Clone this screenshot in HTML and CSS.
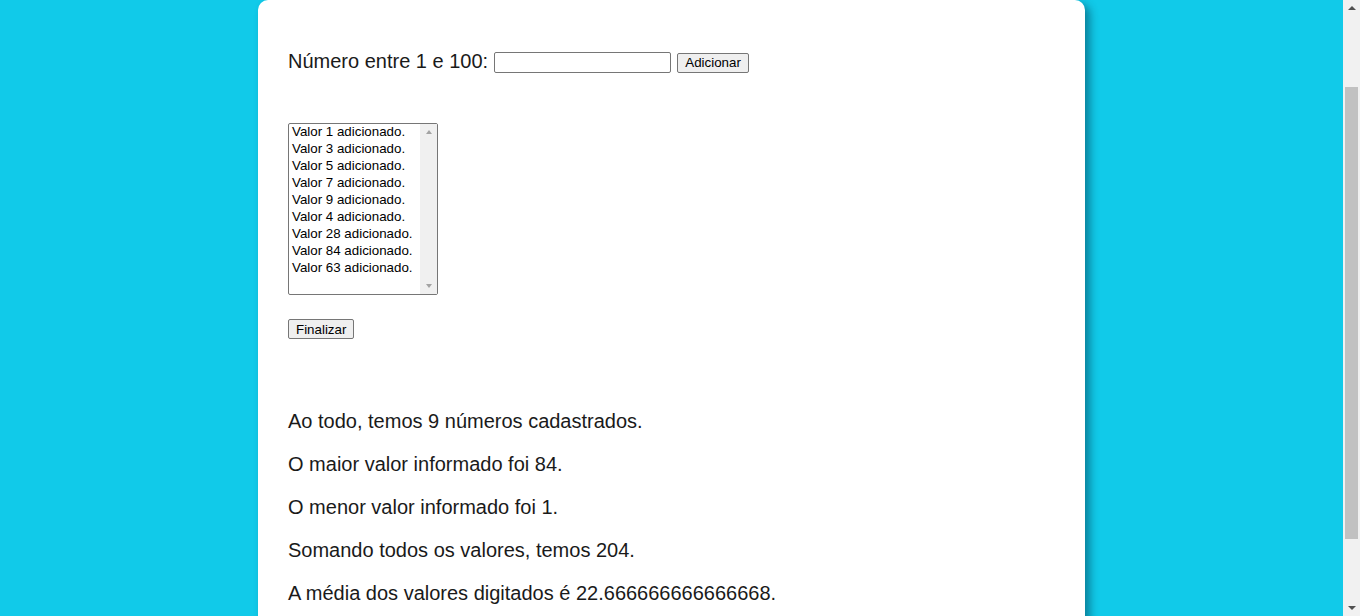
FILE: index.html
```html
<!DOCTYPE html>
<html lang="pt-BR">
<head>
<meta charset="utf-8">
<title>Analisador de números</title>
<link rel="stylesheet" href="styles.css">
</head>
<body>
<div class="page">
  <main class="main">
    <section class="card">
      <p class="entry">Número entre 1 e 100: <input type="number" class="num-input"> <button class="btn add-btn">Adicionar</button></p>
      <div class="listbox">
        <div class="options">
          <div class="opt">Valor 1 adicionado.</div>
          <div class="opt">Valor 3 adicionado.</div>
          <div class="opt">Valor 5 adicionado.</div>
          <div class="opt">Valor 7 adicionado.</div>
          <div class="opt">Valor 9 adicionado.</div>
          <div class="opt">Valor 4 adicionado.</div>
          <div class="opt">Valor 28 adicionado.</div>
          <div class="opt">Valor 84 adicionado.</div>
          <div class="opt">Valor 63 adicionado.</div>
        </div>
        <div class="lb-scroll">
          <span class="lb-arrow up"></span>
          <span class="lb-arrow down"></span>
        </div>
      </div>
      <div class="finish-row"><button class="btn">Finalizar</button></div>
      <div class="results">
        <p>Ao todo, temos 9 números cadastrados.</p>
        <p>O maior valor informado foi 84.</p>
        <p>O menor valor informado foi 1.</p>
        <p>Somando todos os valores, temos 204.</p>
        <p>A média dos valores digitados é 22.666666666666668.</p>
      </div>
    </section>
  </main>
  <div class="scrollbar">
    <span class="sb-arrow up"></span>
    <div class="sb-track"><div class="sb-thumb"></div></div>
    <span class="sb-arrow down"></span>
  </div>
</div>
</body>
</html>
```

FILE: styles.css
```css
html, body {
  margin: 0;
  padding: 0;
  height: 100%;
  overflow: hidden;
}

body {
  font-family: "Liberation Sans", Arial, sans-serif;
  color: #1a1a1a;
}

.page {
  display: flex;
  height: 616px;
}

.main {
  flex: 1;
  background: #11cae9;
  overflow: hidden;
}

.card {
  width: 767px;
  margin: 0 auto;
  padding: 50px 30px 0;
  min-height: 700px;
  background: #ffffff;
  border-radius: 10px 10px 0 0;
  box-shadow: 5px 4px 8px rgba(0, 40, 60, 0.45);
}

.entry {
  margin: 0;
  font-size: 20px;
  line-height: 23px;
}

.num-input {
  box-sizing: border-box;
  width: 177px;
  height: 21px;
  border: 1px solid #767676;
  border-radius: 2px;
  padding: 1px 2px;
  font: 13.33px "Liberation Sans", Arial, sans-serif;
  vertical-align: 1px;
  background: #fff;
}

.btn {
  box-sizing: border-box;
  height: 20px;
  padding: 0 7px;
  font: 13.33px "Liberation Sans", Arial, sans-serif;
  color: #000;
  background: #efefef;
  border: 1px solid #767676;
  border-radius: 2px;
  vertical-align: 1px;
}

.add-btn {
  margin-left: 1px;
}

.listbox {
  box-sizing: border-box;
  margin-top: 50px;
  width: 150px;
  height: 172px;
  border: 1px solid #767676;
  border-radius: 2px;
  display: flex;
  background: #fff;
}

.options {
  flex: 1;
  margin-top: -1px;
  padding-left: 3px;
  font-size: 13.33px;
  line-height: 17px;
  color: #000;
  white-space: nowrap;
}

.lb-scroll {
  width: 17px;
  background: #f0f0f0;
  display: flex;
  flex-direction: column;
  justify-content: space-between;
  align-items: center;
  padding: 6px 0;
}

.lb-arrow {
  width: 0;
  height: 0;
  border-left: 3.5px solid transparent;
  border-right: 3.5px solid transparent;
}

.lb-arrow.up {
  border-bottom: 4px solid #a3a3a3;
}

.lb-arrow.down {
  border-top: 4px solid #a3a3a3;
}

.finish-row {
  margin-top: 24px;
  display: flex;
}

.results {
  margin-top: 71px;
  font-size: 20px;
  line-height: 23px;
}

.results p {
  margin: 0 0 20px;
}

.scrollbar {
  width: 17px;
  background: #f1f1f1;
  display: flex;
  flex-direction: column;
  align-items: center;
}

.sb-track {
  flex: 1;
  width: 100%;
  padding-top: 71px;
  padding-bottom: 59px;
  box-sizing: border-box;
  display: flex;
  justify-content: center;
}

.sb-thumb {
  width: 13px;
  height: 452px;
  background: #c1c1c1;
}

.sb-arrow {
  width: 0;
  height: 0;
  border-left: 4px solid transparent;
  border-right: 4px solid transparent;
  margin: 6px 0;
}

.sb-arrow.up {
  border-bottom: 4px solid #505050;
}

.sb-arrow.down {
  border-top: 4px solid #505050;
}
```
